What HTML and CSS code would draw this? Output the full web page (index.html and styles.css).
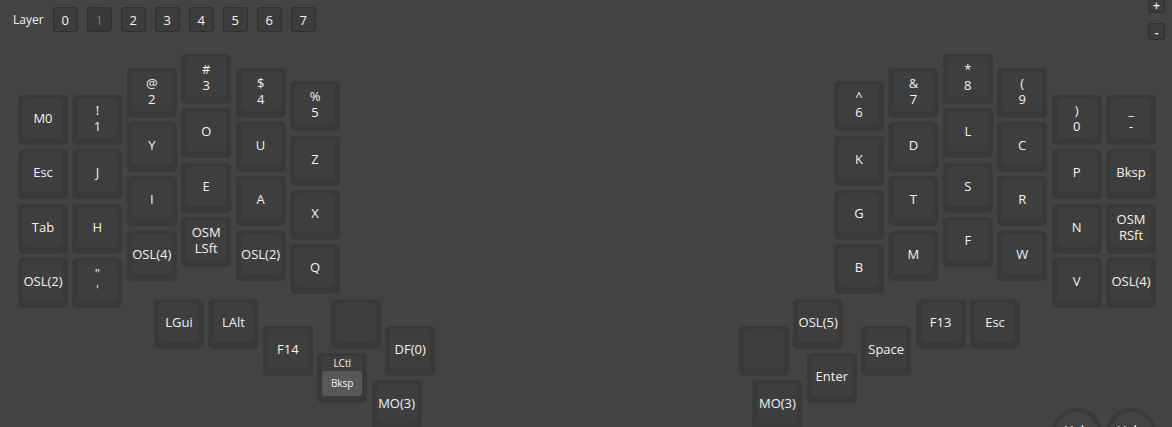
FILE: index.html
```html
<!DOCTYPE html>
<html lang="en">
<head>
    <meta charset="UTF-8">
    <meta name="viewport" content="width=device-width, initial-scale=1.0">
    <title>Keymap</title>
    <link rel="stylesheet" href="styles.css">
</head>
<body>
    <div class="topbar">
        <div class="layers">
            <span class="layer-label">Layer</span>
            <button class="layer-btn">0</button>
            <button class="layer-btn active">1</button>
            <button class="layer-btn">2</button>
            <button class="layer-btn">3</button>
            <button class="layer-btn">4</button>
            <button class="layer-btn">5</button>
            <button class="layer-btn">6</button>
            <button class="layer-btn">7</button>
        </div>
        <div class="zoom">
            <button class="zoom-btn">+</button>
            <button class="zoom-btn">-</button>
        </div>
    </div>

    <!-- 键盘区域，按键位置由数据计算 -->
    <div class="keyboard" id="keyboard"></div>

    <script>
        const UNIT = 54.4;

        // 每列：x、起始 y、四个键
        const columns = [
            [0, 0.75, ['M0', 'Esc', 'Tab', 'OSL(2)']],
            [1, 0.75, ['!\n1', 'J', 'H', '"\n\'']],
            [2, 0.25, ['@\n2', 'Y', 'I', 'OSL(4)']],
            [3, 0, ['#\n3', 'O', 'E', 'OSM\nLSft']],
            [4, 0.25, ['$\n4', 'U', 'A', 'OSL(2)']],
            [5, 0.5, ['%\n5', 'Z', 'X', 'Q']],
            [15, 0.5, ['^\n6', 'K', 'G', 'B']],
            [16, 0.25, ['&\n7', 'D', 'T', 'M']],
            [17, 0, ['*\n8', 'L', 'S', 'F']],
            [18, 0.25, ['(\n9', 'C', 'R', 'W']],
            [19, 0.75, [')\n0', 'P', 'N', 'V']],
            [20, 0.75, ['_\n-', 'Bksp', 'OSM\nRSft', 'OSL(4)']]
        ];

        // 拇指键
        const thumbs = [
            [2.5, 4.5, 'LGui'], [3.5, 4.5, 'LAlt'], [4.5, 5, 'F14'],
            [5.75, 4.5, ''], [5.5, 5.5, 'LCtl|Bksp'], [6.75, 5, 'DF(0)'], [6.5, 6, 'MO(3)'],
            [13.25, 5, ''], [14.25, 4.5, 'OSL(5)'], [13.5, 6, 'MO(3)'], [14.5, 5.5, 'Enter'],
            [15.5, 5, 'Space'], [16.5, 4.5, 'F13'], [17.5, 4.5, 'Esc']
        ];

        const knobs = [[19, 6.5, 'Vol-'], [20, 6.5, 'Vol+']];

        const board = document.getElementById('keyboard');

        function place(el, x, y) {
            el.style.left = (x * UNIT) + 'px';
            el.style.top = (y * UNIT) + 'px';
            board.appendChild(el);
        }

        function addKey(x, y, label) {
            const key = document.createElement('div');
            key.className = 'key';
            const cap = document.createElement('div');
            cap.className = 'cap';
            if (label.includes('|')) {
                const parts = label.split('|');
                cap.classList.add('mod-tap');
                cap.innerHTML = '<span class="mod-label">' + parts[0] + '</span><span class="tap">' + parts[1] + '</span>';
            } else {
                cap.textContent = label;
            }
            key.appendChild(cap);
            place(key, x, y);
        }

        columns.forEach(([x, y0, labels]) => {
            labels.forEach((label, row) => addKey(x, y0 + row, label));
        });
        thumbs.forEach(([x, y, label]) => addKey(x, y, label));
        knobs.forEach(([x, y, label]) => {
            const knob = document.createElement('div');
            knob.className = 'knob';
            knob.textContent = label;
            place(knob, x, y);
        });
    </script>
</body>
</html>
```

FILE: styles.css
```css
body {
    margin: 0;
    background-color: #434343;
    font-family: "Open Sans", "DejaVu Sans", sans-serif;
    color: #f2f2f2;
    overflow: hidden;
}
.topbar {
    display: flex;
    justify-content: space-between;
    align-items: flex-start;
    height: 40px;
    padding: 0 7px 0 13px;
}
.layers {
    display: flex;
    align-items: center;
    gap: 9px;
    margin-top: 7px;
}
.layer-label {
    font-size: 12px;
}
.layer-btn {
    width: 25px;
    height: 25px;
    padding: 0;
    background-color: #3c3c3c;
    border: 1px solid #2f2f2f;
    border-radius: 3px;
    color: #f2f2f2;
    font-family: inherit;
    font-size: 13px;
    cursor: pointer;
}
.layer-btn.active {
    background-color: #383838;
    color: #7a7a7a;
}
.zoom {
    display: flex;
    flex-direction: column;
    gap: 10px;
    margin-top: -4px;
}
.zoom-btn {
    width: 17px;
    height: 17px;
    padding: 0;
    background-color: #3c3c3c;
    border: 1px solid #2f2f2f;
    border-radius: 3px;
    color: #f2f2f2;
    font-family: inherit;
    font-size: 13px;
    font-weight: 600;
    line-height: 14px;
    cursor: pointer;
}
.keyboard {
    position: relative;
    margin: 14px 0 0 18px;
    height: 420px;
}
.key {
    position: absolute;
    width: 50px;
    height: 50px;
    box-sizing: border-box;
    padding: 3px 5px 7px;
    background-color: #393939;
    border-radius: 5px;
}
.cap {
    height: 40px;
    display: flex;
    align-items: center;
    justify-content: center;
    text-align: center;
    background-color: #3e3e3e;
    border-radius: 4px;
    font-size: 13px;
    line-height: 16px;
    white-space: pre;
}
.cap.mod-tap {
    flex-direction: column;
    justify-content: flex-start;
}
.mod-label {
    height: 15px;
    line-height: 15px;
    font-size: 10px;
}
.tap {
    width: 40px;
    height: 25px;
    line-height: 25px;
    background-color: #575757;
    border-radius: 3px;
    font-size: 10px;
}
.knob {
    position: absolute;
    width: 50px;
    height: 50px;
    box-sizing: border-box;
    padding-bottom: 6px;
    border: 4px solid #3a3a3a;
    border-radius: 50%;
    display: flex;
    align-items: center;
    justify-content: center;
    font-size: 13px;
}
```
